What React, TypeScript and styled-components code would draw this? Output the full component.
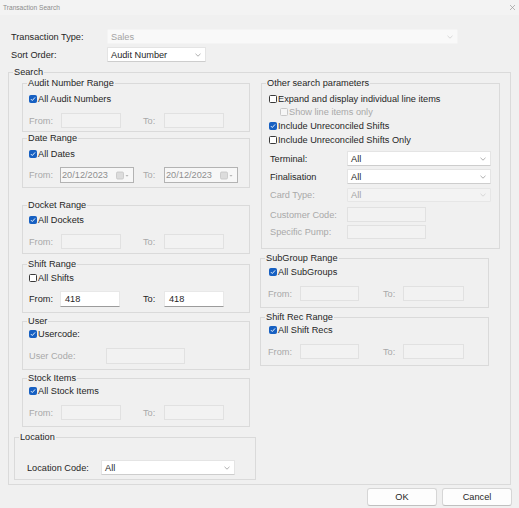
import React from "react";
import styled, { createGlobalStyle } from "styled-components";

const Global = createGlobalStyle`
  html, body { margin: 0; padding: 0; background: #f0f0f0; }
  body {
    font-family: "Liberation Sans", Arial, sans-serif;
    font-size: 9.2px;
    color: #262626;
  }
  * { box-sizing: border-box; }
`;

const Window = styled.div`
  width: 519px;
  height: 508px;
  background: #f0f0f0;
  display: flex;
  flex-direction: column;
  overflow: hidden;
`;

const TitleBar = styled.div`
  flex: none;
  height: 15px;
  display: flex;
  align-items: center;
  justify-content: space-between;
  padding: 0 3px 1px 3px;
  background: #f3f3f3;
  color: #8c8c8c;
  font-size: 6.6px;
`;

const Body = styled.div`
  display: flex;
  flex-direction: column;
  padding: 0 7px 0 8px;
`;

const HeaderRow = styled.div<{ $mt: number }>`
  display: flex;
  align-items: center;
  height: 15px;
  margin-top: ${(p) => p.$mt}px;
`;

const HeaderLabel = styled.div`
  width: 99px;
  padding-left: 3px;
  white-space: nowrap;
`;

const GroupBox = styled.div<{ $w: number; $h: number; $mt: number; $ml?: number }>`
  flex: none;
  display: flex;
  flex-direction: column;
  width: ${(p) => p.$w}px;
  height: ${(p) => p.$h}px;
  margin-top: ${(p) => p.$mt}px;
  margin-left: ${(p) => p.$ml ?? 0}px;
  border: 1px solid #dadada;
`;

const Caption = styled.div`
  align-self: flex-start;
  height: 11px;
  line-height: 11px;
  margin: -6px 0 0 4px;
  padding: 0 1px;
  background: #f0f0f0;
  white-space: nowrap;
`;

const GroupBody = styled.div<{ $pl: number }>`
  display: flex;
  flex-direction: column;
  padding-left: ${(p) => p.$pl}px;
`;

const Columns = styled.div`
  display: flex;
  align-items: flex-start;
`;

const LeftCol = styled.div`
  display: flex;
  flex-direction: column;
  width: 242px;
  margin-left: 5px;
`;

const RightCol = styled.div`
  display: flex;
  flex-direction: column;
  margin-left: 4px;
`;

const CheckRow = styled.div<{ $mt: number; $ml?: number; $off?: boolean }>`
  display: flex;
  align-items: center;
  gap: 1px;
  height: 14px;
  margin-top: ${(p) => p.$mt}px;
  margin-left: ${(p) => p.$ml ?? 0}px;
  color: ${(p) => (p.$off ? "#a9a9a9" : "#262626")};
  white-space: nowrap;
`;

const FieldRow = styled.div<{ $mt: number; $h: number }>`
  display: flex;
  align-items: center;
  height: ${(p) => p.$h}px;
  margin-top: ${(p) => p.$mt}px;
`;

const Label = styled.div<{ $w: number; $ml?: number; $off?: boolean }>`
  flex: none;
  width: ${(p) => p.$w}px;
  margin-left: ${(p) => p.$ml ?? 0}px;
  color: ${(p) => (p.$off ? "#a9a9a9" : "#262626")};
  white-space: nowrap;
`;

const Box = styled.span<{ $on: boolean; $off?: boolean }>`
  flex: none;
  width: 8px;
  height: 8px;
  border-radius: 1.5px;
  display: flex;
  align-items: center;
  justify-content: center;
  background: ${(p) => (p.$on ? "#1760c2" : p.$off ? "#f6f6f6" : "#ffffff")};
  border: 1px solid ${(p) => (p.$on ? "#1760c2" : p.$off ? "#c8c8c8" : "#3a3a3a")};
`;

const TextBox = styled.div<{ $w: number; $active?: boolean }>`
  flex: none;
  width: ${(p) => p.$w}px;
  height: 100%;
  display: flex;
  align-items: center;
  padding-left: 4px;
  background: ${(p) => (p.$active ? "#ffffff" : "#f2f2f2")};
  border: 1px solid ${(p) => (p.$active ? "#e8e8e8" : "#e1e1e1")};
  border-bottom-color: ${(p) => (p.$active ? "#9c9c9c" : "#e1e1e1")};
  color: #262626;
`;

type ComboTone = "normal" | "readonly" | "disabled";

const Combo = styled.div<{ $w: number; $tone: ComboTone }>`
  flex: none;
  width: ${(p) => p.$w}px;
  height: 100%;
  display: flex;
  align-items: center;
  padding: 0 4px 0 3px;
  background: ${(p) => (p.$tone === "normal" ? "#ffffff" : p.$tone === "readonly" ? "#f9f9f9" : "#f3f3f3")};
  border: 1px solid ${(p) => (p.$tone === "normal" ? "#e4e4e4" : p.$tone === "readonly" ? "#f4f4f4" : "#e6e6e6")};
  border-bottom-color: ${(p) => (p.$tone === "normal" ? "#cdcdcd" : p.$tone === "readonly" ? "#f4f4f4" : "#e6e6e6")};
  color: ${(p) => (p.$tone === "normal" ? "#262626" : "#a3a3a3")};
  border-radius: 1px;
`;

const ComboText = styled.span`
  flex: 1;
  white-space: nowrap;
`;

const DateBox = styled.div`
  flex: none;
  width: 74px;
  height: 100%;
  display: flex;
  align-items: center;
  padding: 0 3px 0 1px;
  background: #f7f7f7;
  border: 1px solid #b3b3b3;
  color: #8f8f8f;
`;

const ButtonRow = styled.div`
  display: flex;
  justify-content: flex-end;
  gap: 5px;
  margin-top: 3px;
`;

const Button = styled.button`
  width: 70px;
  height: 18px;
  padding: 0;
  font: inherit;
  color: #262626;
  background: #fdfdfd;
  border: 1px solid #d6d6d6;
  border-bottom-color: #c0c0c0;
  border-radius: 3px;
`;

const Check = ({ on, off }: { on: boolean; off?: boolean }) => (
  <Box $on={on} $off={off}>
    {on && (
      <svg width="6" height="6" viewBox="0 0 6 6">
        <polyline points="0.9,3.1 2.3,4.5 5.1,1.4" fill="none" stroke="#fff" strokeWidth="0.9" />
      </svg>
    )}
  </Box>
);

const Chevron = ({ color }: { color: string }) => (
  <svg width="6" height="4" viewBox="0 0 6 4">
    <polyline points="0.5,0.8 3,3.2 5.5,0.8" fill="none" stroke={color} strokeWidth="0.8" />
  </svg>
);

const CalendarIcon = () => (
  <svg width="14" height="9" viewBox="0 0 14 9">
    <rect x="0.5" y="1" width="7" height="7" rx="1.2" fill="#dcdcdc" stroke="#c4c4c4" strokeWidth="0.8" />
    <polygon points="9.5,4 12.5,4 11,5.8" fill="#b5b5b5" />
  </svg>
);

const CloseIcon = () => (
  <svg width="7" height="7" viewBox="0 0 7 7">
    <path d="M1 1 L6 6 M6 1 L1 6" stroke="#9a9a9a" strokeWidth="0.7" />
  </svg>
);

const Group = ({
  title, w, h, mt, ml, pl, children,
}: {
  title: string; w: number; h: number; mt: number; ml?: number; pl: number; children?: React.ReactNode;
}) => (
  <GroupBox $w={w} $h={h} $mt={mt} $ml={ml}>
    <Caption>{title}</Caption>
    <GroupBody $pl={pl}>{children}</GroupBody>
  </GroupBox>
);

const CheckItem = ({ label, on, mt, ml, off }: { label: string; on: boolean; mt: number; ml?: number; off?: boolean }) => (
  <CheckRow $mt={mt} $ml={ml} $off={off}>
    <Check on={on} off={off} />
    <span>{label}</span>
  </CheckRow>
);

const RangeRow = ({
  mt, h, fromW, inW, toMl, toW, inW2, active, from = "", to = "",
}: {
  mt: number; h: number; fromW: number; inW: number; toMl: number; toW: number; inW2: number; active?: boolean; from?: string; to?: string;
}) => (
  <FieldRow $mt={mt} $h={h}>
    <Label $w={fromW} $off={!active}>From:</Label>
    <TextBox $w={inW} $active={active}>{from}</TextBox>
    <Label $w={toW} $ml={toMl} $off={!active}>To:</Label>
    <TextBox $w={inW2} $active={active}>{to}</TextBox>
  </FieldRow>
);

const ComboRow = ({ label, value, tone, mt, h = 15 }: { label: string; value: string; tone: ComboTone; mt: number; h?: number }) => (
  <FieldRow $mt={mt} $h={h}>
    <Label $w={77} $ml={1} $off={tone === "disabled"}>{label}</Label>
    <Combo $w={144} $tone={tone}>
      <ComboText>{value}</ComboText>
      <Chevron color={tone === "normal" ? "#9a9a9a" : "#cfcfcf"} />
    </Combo>
  </FieldRow>
);

export default function App() {
  return (
    <Window>
      <Global />
      <TitleBar>
        <span>Transaction Search</span>
        <CloseIcon />
      </TitleBar>
      <Body>
        <HeaderRow $mt={14}>
          <HeaderLabel>Transaction Type:</HeaderLabel>
          <Combo $w={351} $tone="readonly">
            <ComboText>Sales</ComboText>
            <Chevron color="#cfcfcf" />
          </Combo>
        </HeaderRow>
        <HeaderRow $mt={3}>
          <HeaderLabel>Sort Order:</HeaderLabel>
          <Combo $w={99} $tone="normal">
            <ComboText>Audit Number</ComboText>
            <Chevron color="#9a9a9a" />
          </Combo>
        </HeaderRow>

        <Group title="Search" w={503} h={413} mt={10} pl={0}>
          <Columns>
            <LeftCol>
              <Group title="Audit Number Range" w={228} h={49} mt={5} ml={8} pl={6}>
                <CheckItem label="All Audit Numbers" on mt={3} />
                <RangeRow mt={7} h={15} fromW={32} inW={60} toMl={22} toW={21} inW2={60} />
              </Group>
              <Group title="Date Range" w={228} h={50} mt={6} ml={8} pl={6}>
                <CheckItem label="All Dates" on mt={3} />
                <FieldRow $mt={6} $h={16}>
                  <Label $w={31} $off>From:</Label>
                  <DateBox>
                    <ComboText>20/12/2023</ComboText>
                    <CalendarIcon />
                  </DateBox>
                  <Label $w={21} $ml={9} $off>To:</Label>
                  <DateBox>
                    <ComboText>20/12/2023</ComboText>
                    <CalendarIcon />
                  </DateBox>
                </FieldRow>
              </Group>
              <Group title="Docket Range" w={228} h={49} mt={17} ml={8} pl={6}>
                <CheckItem label="All Dockets" on mt={2} />
                <RangeRow mt={7} h={15} fromW={32} inW={60} toMl={22} toW={21} inW2={60} />
              </Group>
              <Group title="Shift Range" w={228} h={49} mt={10} ml={8} pl={6}>
                <CheckItem label="All Shifts" on={false} mt={1} />
                <RangeRow mt={6} h={16} fromW={31} inW={60} toMl={23} toW={21} inW2={60} active from="418" to="418" />
              </Group>
              <Group title="User" w={228} h={49} mt={8} ml={8} pl={6}>
                <CheckItem label="Usercode:" on mt={0} />
                <FieldRow $mt={7} $h={16}>
                  <Label $w={77} $off>User Code:</Label>
                  <TextBox $w={79} />
                </FieldRow>
              </Group>
              <Group title="Stock Items" w={228} h={49} mt={8} ml={8} pl={6}>
                <CheckItem label="All Stock Items" on mt={0} />
                <RangeRow mt={7} h={15} fromW={32} inW={60} toMl={22} toW={21} inW2={60} />
              </Group>
              <Group title="Location" w={242} h={43} mt={10} pl={12}>
                <FieldRow $mt={17} $h={15}>
                  <Label $w={74}>Location Code:</Label>
                  <Combo $w={134} $tone="normal">
                    <ComboText>All</ComboText>
                    <Chevron color="#9a9a9a" />
                  </Combo>
                </FieldRow>
              </Group>
            </LeftCol>

            <RightCol>
              <Group title="Other search parameters" w={239} h={166} mt={5} ml={1} pl={7}>
                <CheckItem label="Expand and display individual line items" on={false} mt={3} />
                <CheckItem label="Show line items only" on={false} off mt={-1} ml={11} />
                <CheckItem label="Include Unreconciled Shifts" on mt={0} />
                <CheckItem label="Include Unreconciled Shifts Only" on={false} mt={0} />
                <ComboRow label="Terminal:" value="All" tone="normal" mt={4} />
                <ComboRow label="Finalisation" value="All" tone="normal" mt={3} />
                <ComboRow label="Card Type:" value="All" tone="disabled" mt={4} h={14} />
                <FieldRow $mt={5} $h={15}>
                  <Label $w={77} $ml={1} $off>Customer Code:</Label>
                  <TextBox $w={79} />
                </FieldRow>
                <FieldRow $mt={3} $h={14}>
                  <Label $w={77} $ml={1} $off>Specific Pump:</Label>
                  <TextBox $w={79} />
                </FieldRow>
              </Group>
              <Group title="SubGroup Range" w={229} h={50} mt={9} pl={7}>
                <CheckItem label="All SubGroups" on mt={1} ml={1} />
                <RangeRow mt={7} h={15} fromW={32} inW={59} toMl={24} toW={20} inW2={61} />
              </Group>
              <Group title="Shift Rec Range" w={229} h={49} mt={9} pl={7}>
                <CheckItem label="All Shift Recs" on mt={0} ml={1} />
                <RangeRow mt={7} h={15} fromW={32} inW={59} toMl={24} toW={20} inW2={61} />
              </Group>
            </RightCol>
          </Columns>
        </Group>

        <ButtonRow>
          <Button>OK</Button>
          <Button>Cancel</Button>
        </ButtonRow>
      </Body>
    </Window>
  );
}
